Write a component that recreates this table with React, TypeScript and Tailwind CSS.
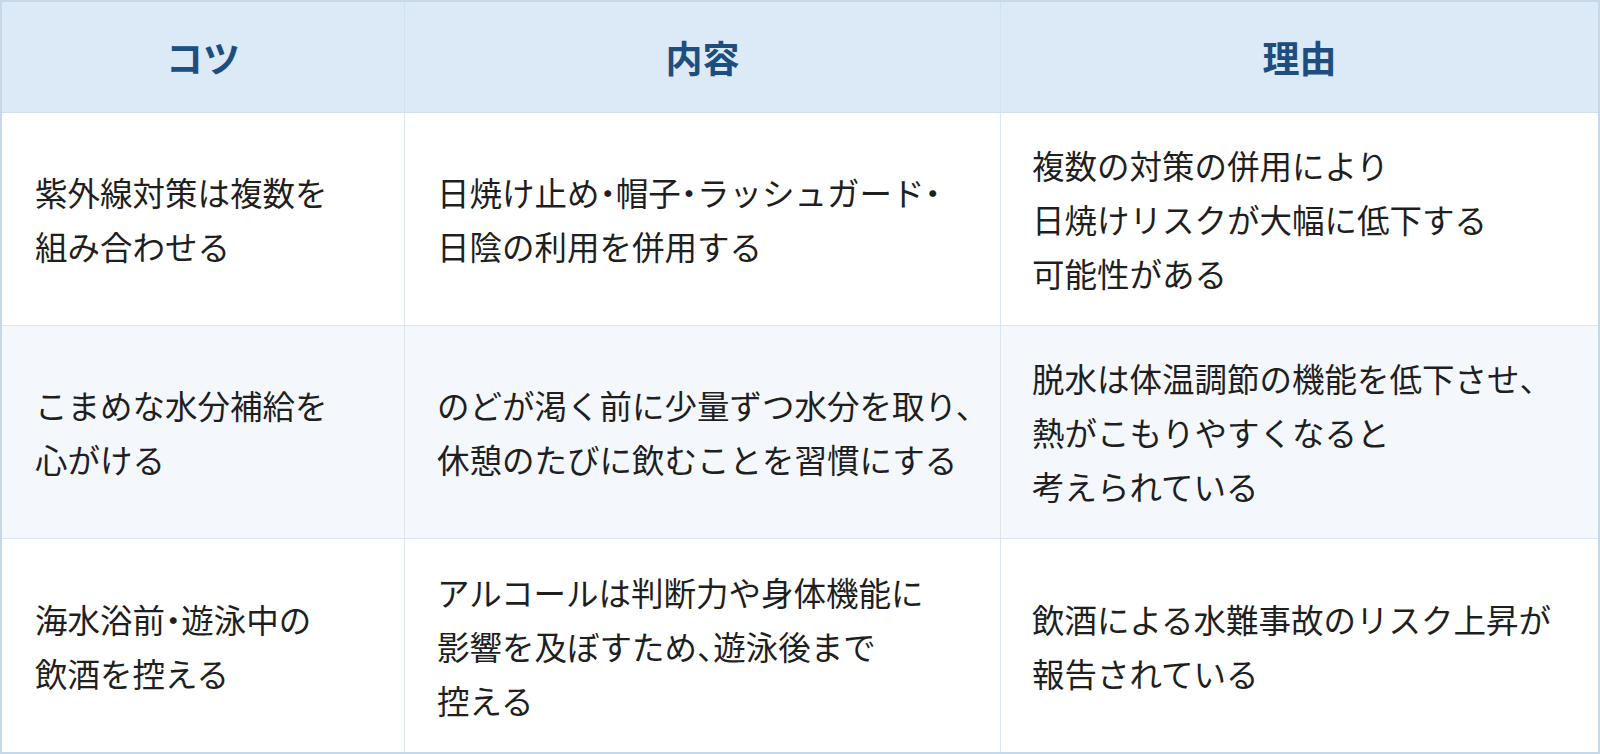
import React from "react";

const rows: { a: string[]; b: string[]; c: string[]; alt?: boolean }[] = [
  {
    a: ["紫外線対策は複数を", "組み合わせる"],
    b: ["日焼け止め・帽子・ラッシュガード・", "日陰の利用を併用する"],
    c: ["複数の対策の併用により", "日焼けリスクが大幅に低下する", "可能性がある"],
  },
  {
    a: ["こまめな水分補給を", "心がける"],
    b: ["のどが渇く前に少量ずつ水分を取り、", "休憩のたびに飲むことを習慣にする"],
    c: ["脱水は体温調節の機能を低下させ、", "熱がこもりやすくなると", "考えられている"],
    alt: true,
  },
  {
    a: ["海水浴前・遊泳中の", "飲酒を控える"],
    b: ["アルコールは判断力や身体機能に", "影響を及ぼすため、遊泳後まで", "控える"],
    c: ["飲酒による水難事故のリスク上昇が", "報告されている"],
  },
];

function Lines({ lines }: { lines: string[] }) {
  return (
    <div className="whitespace-nowrap">
      {lines.map((l, i) => (
        <div key={i}>{l}</div>
      ))}
    </div>
  );
}

export default function App() {
  return (
    <div
      className="w-[1600px] h-[754px] border-2 border-[#c6d9ea] bg-white text-[#1f1f1f] [font-feature-settings:'halt']"
      style={{ fontFamily: '"Noto Sans CJK JP", "Noto Sans", sans-serif' }}
    >
      <div className="grid h-full grid-cols-[403px_596px_1fr] grid-rows-[111px_213px_213px_213px]">
        {["コツ", "内容", "理由"].map((h, i) => (
          <div
            key={h}
            className={`flex items-center justify-center pt-[2px] bg-[#dce9f6] border-b border-[#d2e1ef] text-[37px] font-bold text-[#1d4e7d] ${
              i < 2 ? "border-r" : ""
            }`}
          >
            {h}
          </div>
        ))}
        {rows.map((r, ri) => {
          const bg = r.alt ? "bg-[#f4f8fd]" : "bg-white";
          const bb = ri < 2 ? "border-b" : "";
          return (
            <React.Fragment key={ri}>
              <div className={`flex items-center pl-[33px] text-[32.5px] leading-[54px] border-r border-[#dbe6f1] ${bg} ${bb}`}>
                <Lines lines={r.a} />
              </div>
              <div className={`flex items-center pl-[32px] text-[32.5px] leading-[54px] border-r border-[#dbe6f1] ${bg} ${bb}`}>
                <Lines lines={r.b} />
              </div>
              <div className={`flex items-center pl-[31px] text-[32.5px] leading-[54px] border-[#dbe6f1] ${bg} ${bb}`}>
                <Lines lines={r.c} />
              </div>
            </React.Fragment>
          );
        })}
      </div>
    </div>
  );
}
